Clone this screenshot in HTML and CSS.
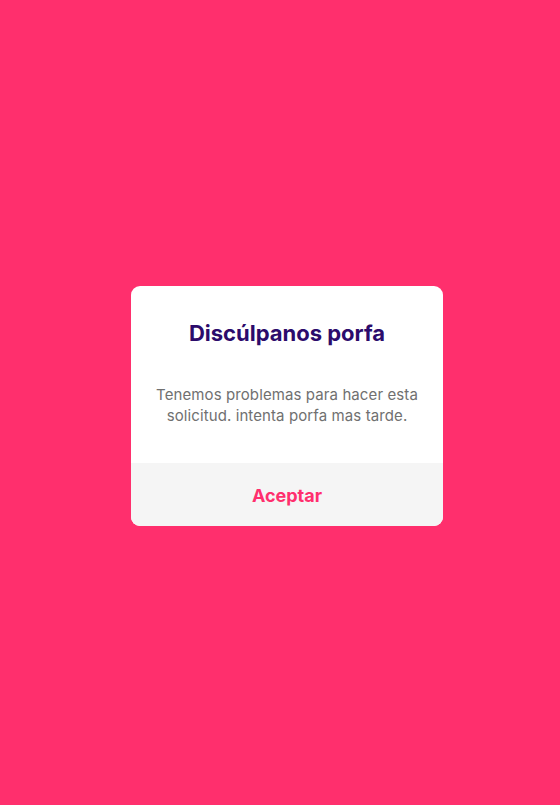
FILE: index.html
```html
<!DOCTYPE html>
<html lang="es">
<head>
<meta charset="utf-8">
<link rel="stylesheet" href="styles.css">
</head>
<body>
<div class="overlay">
  <div class="dialog">
    <div class="dialog-body">
      <h2 class="dialog-title">Discúlpanos porfa</h2>
      <p class="dialog-text">Tenemos problemas para hacer esta solicitud. intenta porfa mas tarde.</p>
    </div>
    <div class="dialog-footer">
      <button class="dialog-btn">Aceptar</button>
    </div>
  </div>
</div>
</body>
</html>
```
FILE: styles.css
```css
html, body {
  margin: 0;
  padding: 0;
  height: 100%;
}
body {
  background: #ff2f6d;
  font-family: Inter, "Noto Sans", sans-serif;
}
.overlay {
  box-sizing: border-box;
  height: 100%;
  display: flex;
  align-items: center;
  justify-content: center;
  padding: 7px 0 0 14px;
}
.dialog {
  width: 312px;
  background: #ffffff;
  border-radius: 9px;
  overflow: hidden;
  display: flex;
  flex-direction: column;
}
.dialog-body {
  height: 177px;
  box-sizing: border-box;
  padding: 33px 16px 0;
  text-align: center;
}
.dialog-title {
  margin: 0;
  font-size: 22px;
  line-height: 28px;
  font-weight: 700;
  color: #2c0b6b;
}
.dialog-text {
  margin: 37px 0 0;
  font-size: 15px;
  line-height: 21px;
  letter-spacing: 0.1px;
  color: #707070;
}
.dialog-footer {
  height: 63px;
  background: #f5f5f5;
  display: flex;
  align-items: center;
  justify-content: center;
  padding-top: 2px;
  box-sizing: border-box;
}
.dialog-btn {
  border: 0;
  background: transparent;
  font-family: inherit;
  font-size: 18px;
  font-weight: 700;
  color: #ff2f6d;
  padding: 0;
}
```
